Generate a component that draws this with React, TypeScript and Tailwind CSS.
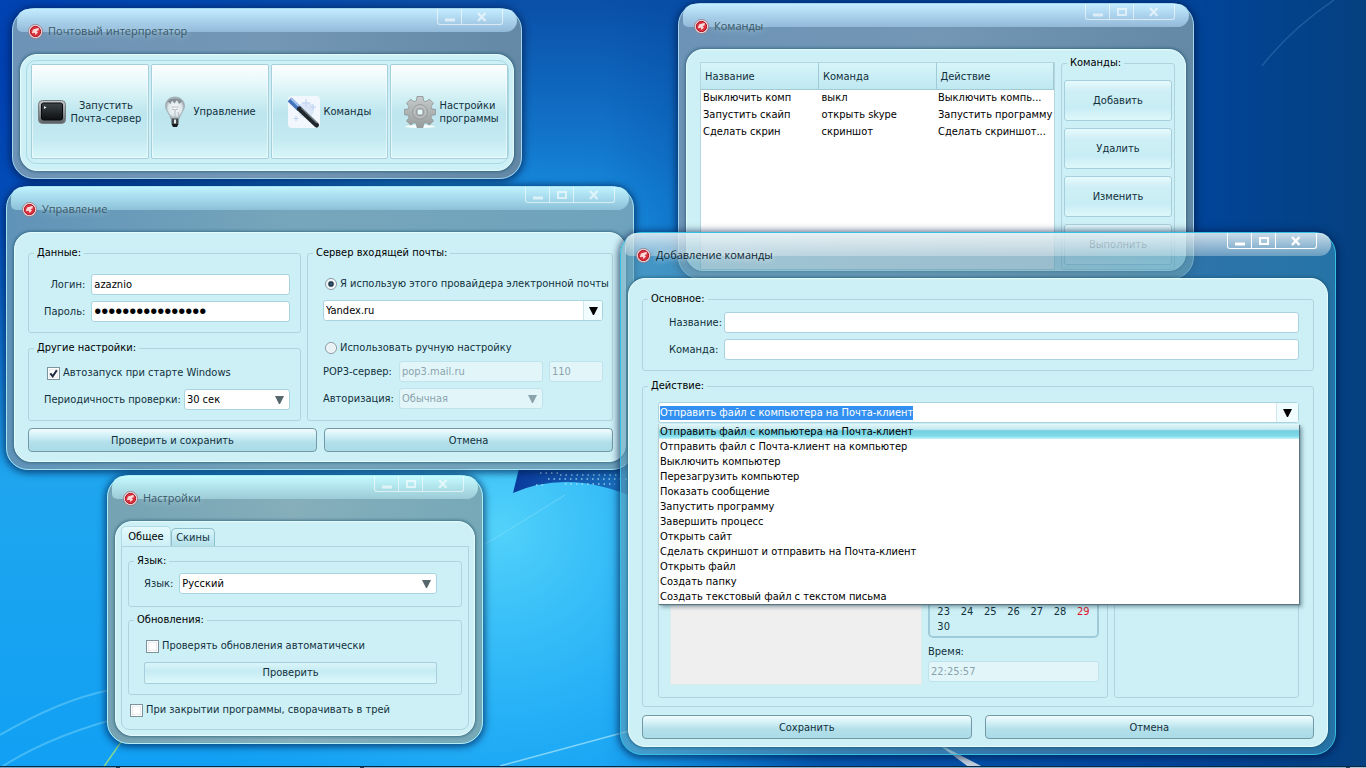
import { useState } from "react";
import type { ReactNode } from "react";
import clsx from "clsx";

const actions = [
  "Отправить файл с компьютера на Почта-клиент",
  "Отправить файл с Почта-клиент на компьютер",
  "Выключить компьютер",
  "Перезагрузить компьютер",
  "Показать сообщение",
  "Запустить программу",
  "Завершить процесс",
  "Открыть сайт",
  "Сделать скриншот и отправить на Почта-клиент",
  "Открыть файл",
  "Создать папку",
  "Создать текстовый файл с текстом письма",
];

const commands = [
  { name: "Выключить комп", command: "выкл", action: "Выключить компь..." },
  { name: "Запустить скайп", command: "открыть skype", action: "Запустить программу" },
  { name: "Сделать скрин", command: "скриншот", action: "Сделать скриншот..." },
];

const days = [23, 24, 25, 26, 27, 28, 29, 30];

const inputClass =
  "h-[21px] w-full min-w-0 rounded-[3px] border border-[#a9d3de] bg-white px-0.5 text-black outline-none disabled:border-[#bfe3ea] disabled:bg-[#e2f6fa] disabled:text-[#8ba3ac]";

const tints = {
  blue: "bg-[linear-gradient(90deg,#6d93b6,#7397b5_50%,#6389a6)] border-[#a5d6ee]",
  teal: "bg-[linear-gradient(90deg,#6093b8,#76a6bb_45%,#6fa3bd)] border-[#a6e4f2]",
  gray: "bg-[linear-gradient(90deg,#75a3b3,#86aebb_50%,#76a9b8)] border-[#b0eef6]",
  active: "bg-[linear-gradient(90deg,rgba(96,160,186,0.6),rgba(88,146,172,0.6)_60%,rgba(60,150,190,0.6))] border-[#35bfe0]",
};

const glosses = {
  blue: "from-[#c3ecff] to-[#93b9d9]",
  teal: "from-[#bff3ff] to-[#8cc0d8]",
  gray: "from-[#c4fbff] to-[#9ccbd6]",
  active: "from-white/75 to-white/30",
};

const AppIcon = () => (
  <svg width="15" height="15" viewBox="0 0 15 15" className="shrink-0">
    <circle cx="7.5" cy="7.5" r="7" fill="#f4e6e8" stroke="#8d6f7a" strokeWidth="0.8" />
    <circle cx="7.5" cy="7.5" r="5.4" fill="#d8303c" />
    <path d="M3.8 9.2 5 5.4 10.8 3.8 10.6 6.4 8.6 7 10 8.4 7.4 11 6.8 8.8Z" fill="#fbdada" />
    <circle cx="7.5" cy="7.5" r="5.2" fill="none" stroke="#a3121f" strokeWidth="0.8" />
  </svg>
);

const Arrow = () => (
  <svg width="9" height="8" viewBox="0 0 9 8"><path d="M0 0h9L5 8H4z" fill="currentColor" /></svg>
);

const WindowControls = ({ active, maximize }: { active?: boolean; maximize?: boolean }) => (
  <div
    className={clsx(
      "mr-[18px] flex h-4 self-start rounded-b-[3px] border border-t-0 border-white text-white",
      active ? "opacity-100" : "opacity-60"
    )}
  >
    <button type="button" aria-label="Свернуть" className="flex w-[23px] items-center justify-center">
      <svg width="12" height="12" viewBox="0 0 12 12"><path d="M1 7.5h10v3H1z" fill="currentColor" /></svg>
    </button>
    {maximize && (
      <button type="button" aria-label="Развернуть" className="flex w-6 items-center justify-center border-l border-white">
        <svg width="12" height="12" viewBox="0 0 12 12"><path d="M2 3h8v6H2z" fill="none" stroke="currentColor" strokeWidth="2" /></svg>
      </button>
    )}
    <button type="button" aria-label="Закрыть" className="flex w-[41px] items-center justify-center border-l border-white">
      <svg width="12" height="12" viewBox="0 0 12 12"><path d="M2 2 9.5 10M9.5 2 2 10" stroke="currentColor" strokeWidth="2.4" /></svg>
    </button>
  </div>
);

const Window = ({
  title, tint, maximize = true, className, children,
}: {
  title: string;
  tint: keyof typeof tints;
  maximize?: boolean;
  className: string;
  children: ReactNode;
}) => {
  const active = tint === "active";

  return (
    <section
      className={clsx(
        "absolute flex flex-col rounded-[22px] border px-[7px] pb-[7px] shadow-[0_1px_7px_2px_rgba(0,25,70,0.65)]",
        tints[tint],
        className
      )}
    >
      <header className="relative -mx-[7px] flex h-[45px] justify-between pl-[15px]">
        <div
          className={clsx(
            "absolute inset-x-1 top-0 h-[23px] rounded-t-[18px] rounded-br-[18px] rounded-bl-[8px] bg-linear-to-b",
            glosses[tint]
          )}
        />
        <h2 className="relative flex h-11 items-center gap-[5px]">
          <AppIcon />
          <span
            className={clsx(
              "font-['Open_Sans','Noto_Sans',sans-serif] text-[11px] leading-4 font-medium",
              active
                ? "text-[#0c2530] [text-shadow:0_0_6px_#fff]"
                : "text-[#3a5866] [text-shadow:0_0_6px_#b9e0ea]"
            )}
          >
            {title}
          </span>
        </h2>
        <div className="relative flex h-full">
          <WindowControls active={active} maximize={maximize} />
        </div>
      </header>
      <div className="flex flex-1 flex-col rounded-[17px] border border-[#e4fbfd] bg-[#cdf0f6] shadow-[0_0_3px_1px_rgba(25,80,105,0.6),inset_0_0_2px_rgba(225,250,253,0.6)]">
        {children}
      </div>
    </section>
  );
};

const Group = ({
  title, className, body, children,
}: {
  title: string;
  className?: string;
  body: string;
  children: ReactNode;
}) => (
  <fieldset className={clsx("min-w-0 rounded-[3px] border border-[#aed5de]", className)}>
    <legend className="ml-[5px] px-[3px] leading-[14px] text-black">{title}</legend>
    <div className={body}>{children}</div>
  </fieldset>
);

const Select = ({
  id, value, label, className, arrow = "text-[#55666d]", disabled, split,
}: {
  id: string;
  value: string;
  label?: string;
  className?: string;
  arrow?: string;
  disabled?: boolean;
  split?: boolean;
}) => (
  <div className={clsx("relative min-w-0", className)}>
    <select id={id} aria-label={label} disabled={disabled} className={clsx(inputClass, "appearance-none pr-6 disabled:opacity-100")}>
      <option>{value}</option>
    </select>
    <span
      className={clsx(
        "pointer-events-none absolute inset-y-px right-px flex w-[19px] items-center justify-center rounded-r-[2px]",
        split && "border-l border-[#d3e8ee] bg-[#f1fcfe]",
        arrow
      )}
    >
      <Arrow />
    </span>
  </div>
);

const Check = ({ label, checked }: { label: string; checked?: boolean }) => (
  <label className="flex h-[14px] items-center gap-[3px]">
    <span className="relative flex size-[13px]">
      <input
        type="checkbox"
        defaultChecked={checked}
        className="peer size-[13px] appearance-none border border-[#7d939b] bg-white shadow-[inset_0_0_0_1px_#fff,inset_0_0_2px_1px_#b9c3c8]"
      />
      <svg width="13" height="13" viewBox="0 0 13 13" className="pointer-events-none absolute inset-0 hidden peer-checked:block">
        <path d="M3.3 6.3 5.7 9.3 9.8 3.2" fill="none" stroke="#1d2b3c" strokeWidth="2" />
      </svg>
    </span>
    {label}
  </label>
);

const Radio = ({ label, checked, onChange }: { label: string; checked: boolean; onChange: () => void }) => (
  <label className="flex h-[14px] items-center gap-[3px] whitespace-nowrap">
    <input
      type="radio"
      name="provider"
      checked={checked}
      onChange={onChange}
      className="ml-0.5 size-3 shrink-0 appearance-none rounded-full border border-[#8799a3] bg-[#e8f1f4] shadow-[inset_0_0_0_1px_#fff] checked:bg-[radial-gradient(circle,#3d6a86_0,#1d2f40_30%,#e8f1f4_50%)]"
    />
    {label}
  </label>
);

const MainButton = ({ children }: { children: ReactNode }) => (
  <button
    type="button"
    className="h-6 rounded-[4px] border border-[#7299a5] bg-[linear-gradient(180deg,#f2fdfe_0,#cdeef5_35%,#b3e0ea_60%,#a9dbe7)] pt-0.5 leading-5"
  >
    {children}
  </button>
);

const SideButton = ({ children }: { children: ReactNode }) => (
  <button
    type="button"
    className="h-[41px] rounded-[3px] border border-[#a6cfdb] bg-[linear-gradient(180deg,#e6fafd_0,#cfeff6_25%,#c8edf4_70%,#def8fb)]"
  >
    {children}
  </button>
);

const ToolButton = ({ icon, children, className }: { icon: ReactNode; children: ReactNode; className?: string }) => (
  <button
    type="button"
    className={clsx(
      "flex items-center justify-center rounded-[2px] border border-[#a5cfda] bg-[linear-gradient(180deg,#fcffff_0,#e3f6f9_22%,#cdeef3_38%,#bde5ee_52%,#c4eaf1_80%,#d8f6f9)] leading-[13px] shadow-[inset_0_0_0_1px_rgba(255,255,255,0.5)]",
      className
    )}
  >
    {icon}
    <span>{children}</span>
  </button>
);

const TerminalIcon = () => (
  <svg width="28" height="24" viewBox="0 0 28 24" className="shrink-0">
    <defs>
      <linearGradient id="bezel" x1="0" y1="0" x2="0" y2="1">
        <stop offset="0" stopColor="#c3c8cb" />
        <stop offset="1" stopColor="#5a6166" />
      </linearGradient>
      <linearGradient id="screen" x1="0" y1="0" x2="0" y2="1">
        <stop offset="0" stopColor="#3d4448" />
        <stop offset="1" stopColor="#0c0f11" />
      </linearGradient>
    </defs>
    <rect x="0.5" y="0.5" width="27" height="23" rx="4" fill="url(#bezel)" stroke="#777e82" />
    <rect x="3.5" y="3" width="21" height="17" rx="2" fill="url(#screen)" stroke="#0a0a0a" />
    <path d="M6 6 8.5 7.5 6 9Z" fill="#e9eef0" />
  </svg>
);

const BulbIcon = () => (
  <svg width="22" height="32" viewBox="0 0 22 32" className="shrink-0">
    <defs>
      <radialGradient id="glass" cx="0.5" cy="0.5">
        <stop offset="0" stopColor="#fafdfe" />
        <stop offset="0.7" stopColor="#dde6e9" />
        <stop offset="1" stopColor="#9aa6ac" />
      </radialGradient>
    </defs>
    <path d="M11 1C5.2 1 1.5 5 1.5 10c0 4.500 4 7.500 5.500 13h8c1.500-5.500 5.500-8.500 5.500-13C20.500 5 16.800 1 11 1Z" fill="url(#glass)" stroke="#9aa7ad" strokeWidth="0.7" />
    <path d="M4 5.500C6.500 1.500 15.500 1.500 18 5.500L15 8 13 4 10.500 7.500 8 4.500 6.500 8Z" fill="#6f7a82" opacity="0.8" />
    <path d="M7.500 11h7M8 13l3 1 3-1M11 14v9M14 16l1 4" stroke="#a3acb1" fill="none" strokeWidth="0.8" />
    <rect x="7.5" y="22.5" width="7" height="6" rx="1" fill="#43484b" />
    <path d="M10 23.500h2v4h-2z" fill="#e3e8ea" />
    <path d="M7.500 28h7l-1.500 3H9z" fill="#17191a" />
  </svg>
);

const WandIcon = () => (
  <svg width="32" height="32" viewBox="0 0 32 32" className="shrink-0">
    <rect width="32" height="32" rx="4" fill="#f1f7fd" />
    <path d="M18 3v8M14 7h8M25 8v6M22 11h6M8 20v5M5.500 22.500h5" stroke="#b5cdf0" strokeWidth="0.9" />
    <circle cx="18" cy="14" r="8" fill="#c5d6f3" opacity="0.5" />
    <path d="M1.500 3.500 11.500 13" stroke="#4373bb" strokeWidth="5.5" />
    <path d="M3 2.500 12.500 11.500" stroke="#a4c5f0" strokeWidth="1.8" />
    <path d="M11.500 13 28.500 29" stroke="#20272c" strokeWidth="5" strokeLinecap="round" />
    <path d="M13.500 12 29 27" stroke="#6f7e83" strokeWidth="1.2" />
  </svg>
);

const GearIcon = () => (
  <svg width="32" height="32" viewBox="0 0 32 32" className="shrink-0">
    <defs>
      <linearGradient id="metal" x1="0" y1="0" x2="0" y2="1">
        <stop offset="0" stopColor="#c7caca" />
        <stop offset="1" stopColor="#989c9c" />
      </linearGradient>
    </defs>
    <ellipse cx="16" cy="30.5" rx="15" ry="1.5" fill="#fff" />
    <path d="M13 .5h6l.6 4.200 2.400 1 3.400-2.500 4 4-2.500 3.400 1 2.400 4 .6v5l-4 .6-1 2.400 2.500 3.400-4 4-3.400-2.500-2.400 1-.6 4h-6l-.6-4-2.400-1-3.400 2.500-4-4 2.500-3.400-1-2.400-4-.6v-5l4-.6 1-2.400-2.500-3.400 4-4L10 5.700l2.400-1Z" fill="url(#metal)" stroke="#8b9090" strokeWidth="0.8" />
    <circle cx="16" cy="16" r="7.5" fill="none" stroke="#9ba0a0" />
    <circle cx="16" cy="16" r="5.5" fill="none" stroke="#c2c6c6" />
    <rect x="13" y="13" width="6" height="6" rx="1.5" fill="#e8f7fa" stroke="#858a8a" />
  </svg>
);

const Wallpaper = () => (
  <svg className="absolute inset-0 size-full" viewBox="0 0 1366 768" preserveAspectRatio="none" aria-hidden="true">
    <defs>
      <linearGradient id="sky" x1="0" y1="0" x2="0" y2="1">
        <stop offset="0" stopColor="#0a4fa8" />
        <stop offset="0.25" stopColor="#1583d6" />
        <stop offset="0.6" stopColor="#1fa6ee" />
        <stop offset="1" stopColor="#11a0f4" />
      </linearGradient>
      <radialGradient id="glow" gradientUnits="userSpaceOnUse" cx="500" cy="530" r="400">
        <stop offset="0" stopColor="#52d2fa" />
        <stop offset="0.4" stopColor="#35bdf9" stopOpacity="0.7" />
        <stop offset="1" stopColor="#169bf0" stopOpacity="0" />
      </radialGradient>
      <linearGradient id="night" x1="0" y1="0" x2="1" y2="0">
        <stop offset="0.44" stopColor="#00459e" stopOpacity="0" />
        <stop offset="0.6" stopColor="#00459e" stopOpacity="0.8" />
        <stop offset="0.85" stopColor="#00459e" />
        <stop offset="1" stopColor="#05407f" />
      </linearGradient>
      <radialGradient id="left" gradientUnits="userSpaceOnUse" cx="0" cy="60" r="420">
        <stop offset="0" stopColor="#0040b0" />
        <stop offset="0.4" stopColor="#0046b4" stopOpacity="0.85" />
        <stop offset="1" stopColor="#0046b4" stopOpacity="0" />
      </radialGradient>
      <linearGradient id="flag" x1="0" y1="0" x2="1" y2="0">
        <stop offset="0" stopColor="#0a3a9c" />
        <stop offset="1" stopColor="#1c7ac4" />
      </linearGradient>
    </defs>
    <rect width="1366" height="768" fill="url(#sky)" />
    <rect width="1366" height="768" fill="url(#glow)" />
    <rect width="1366" height="768" fill="url(#left)" />
    <rect width="1366" height="768" fill="url(#night)" />
    <path d="M526 440 513 493Q570 468 640 500V440Z" fill="url(#flag)" />
    <path d="M540 473h20M548 479h80M536 485h10M560 475h60M565 484h50" stroke="#b4e6fb" strokeWidth="1.5" strokeDasharray="1.5 4" opacity="0.8" />
    <path d="M0 735Q60 700 110 690M0 768Q50 735 130 715" stroke="#8fe0fb" strokeWidth="2" fill="none" opacity="0.4" />
    <path d="M103 768 128 732" stroke="#a8e47a" strokeWidth="1.5" opacity="0.8" />
    <path d="M500 766Q560 750 640 728" stroke="#a9e5fb" strokeWidth="1.5" fill="none" opacity="0.7" />
    <path d="M484 545 565 495" stroke="#8fe0fb" opacity="0.5" />
    <path d="M935 742 985 768H970Z" fill="#d8dfe4" opacity="0.9" />
    <path d="M1334 0Q1290 30 1262 66" stroke="#4a86c0" strokeWidth="1.5" fill="none" opacity="0.4" />
  </svg>
);

const App = () => {
  const [action, setAction] = useState(actions[0]);
  const [open, setOpen] = useState(true);
  const [manual, setManual] = useState(false);

  return (
    <main className="relative min-h-screen overflow-hidden bg-[#0b6fc8] font-['DejaVu_Sans_Condensed','DejaVu_Sans',sans-serif] text-[11px] leading-[14px] text-[#12303c]">
      <Wallpaper />

      {/* main toolbar */}
      <Window title="Почтовый интерпретатор" tint="blue" maximize={false} className="top-2 left-3 h-[171px] w-[510px]">
        <div className="mt-[5px] mr-1 mb-1.5 ml-[5px] flex flex-1 rounded-[10px] border border-[#a9d9e2] pt-[3px] pb-1 pl-1">
          <div className="grid flex-1 grid-cols-4 gap-0.5">
            <ToolButton icon={<TerminalIcon />} className="gap-1">
              Запустить<br />Почта-сервер
            </ToolButton>
            <ToolButton icon={<BulbIcon />} className="gap-2">Управление</ToolButton>
            <ToolButton icon={<WandIcon />} className="gap-1">Команды</ToolButton>
            <ToolButton icon={<GearIcon />} className="gap-1 pl-1 text-left">
              Настройки<br />программы
            </ToolButton>
          </div>
        </div>
      </Window>

      {/* account */}
      <Window title="Управление" tint="teal" className="top-[186px] left-[6px] w-[628px]">
        <form className="flex flex-col gap-[7px] pt-[13px] pr-3 pb-[9px] pl-[13px]">
          <div className="flex gap-1.5">
            <div className="flex w-[273px] flex-col gap-2">
              <Group title="Данные:" body="pt-3.5 pr-2.5 pb-2.5 pl-[15px]">
                <div className="grid grid-cols-[auto_1fr] items-center gap-1.5">
                  <label htmlFor="login" className="text-right">Логин:</label>
                  <input id="login" defaultValue="azaznio" className={inputClass} />
                  <label htmlFor="password" className="text-right">Пароль:</label>
                  <input
                    id="password"
                    type="password"
                    defaultValue="qwertyuiopasdfgh"
                    className={clsx(inputClass, "font-['Liberation_Sans',sans-serif] text-[20px]")}
                  />
                </div>
              </Group>
              <Group title="Другие настройки:" body="pt-[11px] pr-2.5 pb-2.5 pl-[15px]">
                <div className="pl-[3px]">
                  <Check label="Автозапуск при старте Windows" checked />
                </div>
                <div className="mt-[9px] flex items-center gap-[3px]">
                  <label htmlFor="period" className="whitespace-nowrap">Периодичность проверки:</label>
                  <Select id="period" value="30 сек" className="flex-1" />
                </div>
              </Group>
            </div>
            <Group title="Сервер входящей почты:" className="flex-1" body="pt-[17px] pr-[9px] pb-[11px] pl-[15px]">
              <Radio label="Я использую этого провайдера электронной почты" checked={!manual} onChange={() => setManual(false)} />
              <Select id="provider" label="Провайдер" value="Yandex.ru" className="mt-[9px]" arrow="text-black" split />
              <div className="mt-5">
                <Radio label="Использовать ручную настройку" checked={manual} onChange={() => setManual(true)} />
              </div>
              <div className="mt-1.5 grid grid-cols-[70px_1fr_54px] items-center gap-x-1.5 gap-y-1.5">
                <label htmlFor="pop3">POP3-сервер:</label>
                <input id="pop3" defaultValue="pop3.mail.ru" disabled={!manual} className={inputClass} />
                <input aria-label="Порт" defaultValue="110" disabled={!manual} className={inputClass} />
                <label htmlFor="auth">Авторизация:</label>
                <Select id="auth" value="Обычная" disabled={!manual} arrow="text-[#8ba3ac]" />
              </div>
            </Group>
          </div>
          <div className="grid grid-cols-2 gap-[7px]">
            <MainButton>Проверить и сохранить</MainButton>
            <MainButton>Отмена</MainButton>
          </div>
        </form>
      </Window>

      {/* settings */}
      <Window title="Настройки" tint="gray" className="top-[475px] left-[107px] w-[376px]">
        <div className="px-[5px] pt-1 pb-[5px]">
          <div role="tablist" className="flex items-end">
            <button type="button" role="tab" aria-selected="true" className="h-5 w-[50px] rounded-t-[5px] border border-b-0 border-[#b4dbe3] bg-linear-to-b from-[#e4fafd] to-[#cdf0f6] text-black">
              Общее
            </button>
            <button type="button" role="tab" aria-selected="false" className="h-[18px] w-11 rounded-t-[5px] border border-b-0 border-[#8fbfcc] bg-linear-to-b from-[#d9f7fb] to-[#b4e0ea]">
              Скины
            </button>
          </div>
          <div role="tabpanel" className="rounded-b-[8px] border border-[#aed5de] px-1.5 pt-[7px] pb-3">
            <Group title="Язык:" body="pt-[5px] pr-6 pb-3 pl-[15px]">
              <div className="flex items-center gap-1.5">
                <label htmlFor="lang">Язык:</label>
                <Select id="lang" value="Русский" className="flex-1" />
              </div>
            </Group>
            <Group title="Обновления:" className="mt-1.5" body="pt-3 pr-6 pb-2.5 pl-[15px]">
              <div className="pl-0.5">
                <Check label="Проверять обновления автоматически" />
              </div>
              <button
                type="button"
                className="mt-[9px] block h-[22px] w-full rounded-[2px] border border-[#a6cfdb] bg-[linear-gradient(180deg,#d9f5fa_0,#c6ebf2_40%,#cdf0f6_60%,#dbf8fb)]"
              >
                Проверить
              </button>
            </Group>
            <div className="mt-2 pl-0.5">
              <Check label="При закрытии программы, сворачивать в трей" />
            </div>
          </div>
        </div>
      </Window>

      {/* command list */}
      <Window title="Команды" tint="blue" className="top-[3px] left-[678px] h-[276px] w-[516px]">
        <div className="flex flex-1 gap-1.5 pr-2.5 pl-[13px]">
          <div className="mt-3 flex-1 border border-[#b3d6df] bg-white">
            <table className="w-full table-fixed border-collapse text-left text-black">
              <thead>
                <tr className="h-[26px] bg-linear-to-b from-[#d6f5f9] to-[#bfe8f1] text-[#12303c]">
                  <th className="border-r border-b border-[#a0cbd6] pt-0.5 pl-1 font-normal">Название</th>
                  <th className="border-r border-b border-[#a0cbd6] pt-0.5 pl-1 font-normal">Команда</th>
                  <th className="border-r border-b border-[#a0cbd6] pt-0.5 pl-1 font-normal">Действие</th>
                </tr>
              </thead>
              <tbody>
                {commands.map((row) => (
                  <tr key={row.name} className="h-[17px] whitespace-nowrap">
                    <td className="pl-0.5">{row.name}</td>
                    <td className="pl-[3px]">{row.command}</td>
                    <td className="pl-0.5">{row.action}</td>
                  </tr>
                ))}
              </tbody>
            </table>
          </div>
          <Group title="Команды:" className="mt-1.5 w-[114px]" body="px-0.5 pt-2.5">
            <div className="flex flex-col gap-[7px]">
              <SideButton>Добавить</SideButton>
              <SideButton>Удалить</SideButton>
              <SideButton>Изменить</SideButton>
              <SideButton>Выполнить</SideButton>
            </div>
          </Group>
        </div>
      </Window>

      {/* add command */}
      <Window title="Добавление команды" tint="active" className="top-[232px] left-[620px] w-[716px]">
        <form className="flex flex-col gap-2 px-[13px] pt-[13px] pb-[7px]">
          <Group title="Основное:" body="pt-1.5 pr-3.5 pb-2.5 pl-[26px]">
            <div className="grid grid-cols-[49px_1fr] items-center gap-1.5">
              <label htmlFor="name">Название:</label>
              <input id="name" className={inputClass} />
              <label htmlFor="command">Команда:</label>
              <input id="command" className={inputClass} />
            </div>
          </Group>
          <Group title="Действие:" body="pt-[9px] pr-3.5 pb-2 pl-[15px]">
            <div className="relative">
              <button
                type="button"
                aria-haspopup="listbox"
                aria-expanded={open}
                onClick={() => setOpen(!open)}
                className="flex h-[21px] w-full items-center justify-between rounded-[3px] border border-[#a9d3de] bg-white pl-px"
              >
                <span className="bg-[#3390f0] text-white">{action}</span>
                <span className="flex h-full w-[22px] items-center justify-center border-l border-[#d3e8ee] bg-[#f1fcfe] text-black">
                  <Arrow />
                </span>
              </button>
              {open && (
                <ul role="listbox" aria-label="Действие" className="absolute inset-x-0 top-[22px] z-10 border-l border-[#b9cdd3] bg-white text-black shadow-[1px_1px_1px_#5a757f,3px_3px_4px_rgba(0,40,60,0.4)]">
                  {actions.map((item) => (
                    <li
                      key={item}
                      role="option"
                      aria-selected={item === action}
                      onClick={() => { setAction(item); setOpen(false); }}
                      className={clsx(
                        "h-[15px] pl-px leading-[15px]",
                        item === action && "bg-[linear-gradient(180deg,#e3f7fa_0,#c5eaf1_35%,#74cfe0_45%,#7fdbe9_80%,#c9f6fa)]"
                      )}
                    >
                      {item}
                    </li>
                  ))}
                </ul>
              )}
            </div>
            <div className="mt-2 flex h-[267px] gap-1.5">
              <div className="flex flex-1 gap-1.5 rounded-[3px] border border-[#aed5de] pt-3 pr-2 pb-3 pl-[11px]">
                <textarea aria-label="Текст" disabled className="w-[252px] resize-none border border-[#dcebee] bg-[#efefef]" />
                <div className="flex flex-1 flex-col justify-end pb-[3px]">
                  <div className="grid flex-1 grid-cols-7 content-end rounded-[5px] border-2 border-[#9fccd8] px-0.5 pb-0.5 text-center">
                    {days.map((day) => (
                      <span key={day} className={clsx("h-[15px] leading-[15px]", day === 29 && "text-[#e0102a]")}>{day}</span>
                    ))}
                  </div>
                  <label htmlFor="time" className="mt-[7px]">Время:</label>
                  <input id="time" disabled defaultValue="22:25:57" className={clsx(inputClass, "mt-0.5")} />
                </div>
              </div>
              <div className="w-[185px] rounded-[3px] border border-[#aed5de]" />
            </div>
          </Group>
          <div className="grid grid-cols-2 gap-[13px]">
            <MainButton>Сохранить</MainButton>
            <MainButton>Отмена</MainButton>
          </div>
        </form>
      </Window>

      {/* top edge of the taskbar */}
      <div className="absolute inset-x-0 bottom-0 flex h-0.5 gap-1 border-t border-[#0d2740] bg-[#20405c]">
        <span className="w-[116px] bg-[#7fa9c8]" />
        <span className="w-[240px] bg-[#a9c6d9]" />
        <span className="flex-1 bg-[#8fb2cd]" />
        <span className="w-4 bg-[#a9c6d9]" />
      </div>
    </main>
  );
};

export default App;
